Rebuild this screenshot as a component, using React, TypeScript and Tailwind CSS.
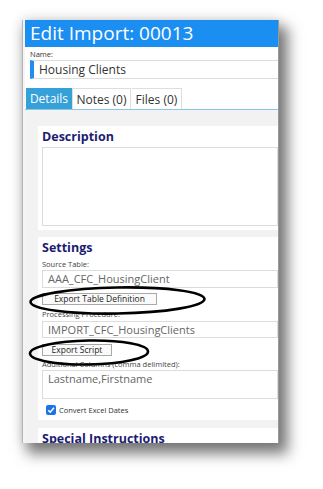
export default function App() {
  return (
    <div className="relative w-[323px] h-[489px] overflow-hidden bg-white font-['Open_Sans',sans-serif]">
      <div className="ml-[22px] mt-[20px] w-[257px] h-[423px] overflow-hidden border-l border-r border-l-[#b5b5b5] border-r-[#9a9a9a] bg-[#f4f4f4] pl-[2px] shadow-[7px_9px_13px_2px_rgba(0,0,0,0.5),0_0_12px_rgba(0,0,0,0.14)]">
        <div className="flex h-full flex-col bg-white">
          {/* header */}
          <div className="h-[27px] shrink-0 bg-[#1b8ef2] pl-[5px] text-[19px] leading-[27px] text-white">
            Edit Import: 00013
          </div>

          {/* name */}
          <div className="pl-[5px] pt-[3px]">
            <div className="text-[7.5px] leading-[9px] text-[#333]">Name:</div>
            <div className="mt-[1px] h-[19px] border-l-4 border-y border-l-[#1e8ef0] border-y-[#dcdcdc] pl-[5px] text-[12px] leading-[17px] text-[#333]">
              Housing Clients
            </div>
          </div>

          {/* tabs */}
          <div className="mt-[9px] flex h-[22px] shrink-0 border-b border-[#8cc6e6] pl-[1px] text-[12px] leading-[21px]">
            <div className="w-[46px] bg-[#36a0d9] text-center text-white">Details</div>
            <div className="w-[59px] border-x border-t border-[#dedede] bg-white text-center text-[#333]">Notes (0)</div>
            <div className="ml-[1px] w-[50px] border-r border-t border-[#dedede] bg-white text-center text-[#333]">Files (0)</div>
          </div>

          {/* content */}
          <div className="flex-1 bg-[#f2f2f2] pl-[13px] pt-[16px]">
            <div className="bg-white pb-[4px] pl-[4px] pt-[3px]">
              <div className="text-[12.5px] font-bold leading-[16px] text-[#1c1c72]">Description</div>
              <div className="mt-[2px] h-[79px] border border-[#dcdcdc] bg-white" />
            </div>

            <div className="mt-[7px] bg-white pb-[5px] pl-[4px] pt-[3px]">
              <div className="text-[12.5px] font-bold leading-[16px] text-[#1c1c72]">Settings</div>

              <div className="mt-[4px] text-[7.5px] leading-[9px] text-[#444]">Source Table:</div>
              <div className="mt-[1px] h-[18px] border border-[#dcdcdc] pl-[5px] text-[11px] leading-[16px] text-[#666]">
                AAA_CFC_HousingClient
              </div>
              <div className="mt-[5px] h-[12px] w-[115px] border border-[#a9a9a9] bg-[#fafafa] text-center text-[8.5px] leading-[10px] text-[#222]">
                Export Table Definition
              </div>

              <div className="mt-[5px] text-[7.5px] leading-[9px] text-[#444]">Processing Procedure:</div>
              <div className="mt-[2px] h-[17px] border border-[#dcdcdc] pl-[5px] text-[11px] leading-[15px] text-[#666]">
                IMPORT_CFC_HousingClients
              </div>
              <div className="mt-[6px] h-[12px] w-[70px] border border-[#a9a9a9] bg-[#fafafa] text-center text-[8.5px] leading-[10px] text-[#222]">
                Export Script
              </div>

              <div className="mt-[4px] text-[7.5px] leading-[9px] text-[#444]">Additional Columns (comma delimited):</div>
              <div className="mt-[1px] h-[29px] border border-[#dcdcdc] pl-[5px] pt-[1px] text-[11px] leading-[14px] text-[#666]">
                Lastname,Firstname
              </div>

              <div className="mt-[6px] flex h-[10px] items-center pl-[4px]">
                <svg width="10" height="10" viewBox="0 0 10 10" className="shrink-0">
                  <rect x="0" y="0" width="10" height="10" rx="2" fill="#1a73e8" />
                  <path d="M2.2 5.2 L4.2 7.2 L8 2.8" stroke="white" strokeWidth="1.6" fill="none" />
                </svg>
                <span className="ml-[3px] text-[7.5px] leading-[10px] text-[#333]">Convert Excel Dates</span>
              </div>
            </div>

            <div className="mt-[8px] bg-white pl-[4px] pt-[3px]">
              <div className="text-[12.5px] font-bold leading-[16px] text-[#1c1c72]">Special Instructions</div>
            </div>
          </div>
        </div>
      </div>

      {/* annotation ellipses */}
      <svg className="pointer-events-none absolute left-0 top-0" width="323" height="489">
        <ellipse cx="117.5" cy="300.5" rx="87" ry="13" fill="none" stroke="#000" strokeWidth="2.6" transform="rotate(-1 117.5 300.5)" />
        <ellipse cx="89" cy="352.5" rx="59" ry="12" fill="none" stroke="#000" strokeWidth="2.6" transform="rotate(-1 89 352.5)" />
      </svg>
    </div>
  );
}
